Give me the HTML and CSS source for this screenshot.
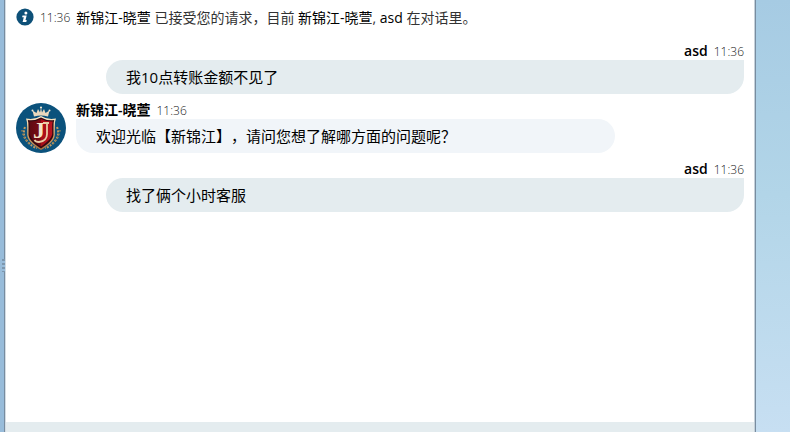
FILE: index.html
```html
<!DOCTYPE html>
<html lang="zh-CN">

<head>
    <meta charset="utf-8">
    <meta name="viewport" content="width=device-width, initial-scale=1.0">
    <title>在线客服</title>
    <link rel="stylesheet" href="styles.css">
</head>

<body>
    <div class="grip"></div>

    <main class="chat">
        <section class="messages">
            <p class="status">
                <svg class="info" viewBox="0 0 18 18" aria-hidden="true">
                    <circle cx="9" cy="9" r="8.6" fill="#0d5078"/>
                    <circle cx="9.9" cy="4.9" r="1.5" fill="#fff"/>
                    <path d="M6.5 7.4h4.2l-1.2 4.7h1.2l-.4 1.8H6.6l1.2-4.7H6.1z" fill="#fff"/>
                </svg>
                <time>11:36</time>
                <span><b>新锦江-晓萱</b> 已接受您的请求，目前 <b>新锦江-晓萱</b>, <b>asd</b> 在对话里。</span>
            </p>

            <article class="message visitor">
                <header><strong>asd</strong><time>11:36</time></header>
                <p class="bubble">我10点转账金额不见了</p>
            </article>

            <article class="message agent">
                <svg class="avatar" viewBox="0 0 50 50" aria-hidden="true">
                    <defs>
                        <linearGradient id="gold" x1="0" y1="0" x2="0" y2="1">
                            <stop offset="0" stop-color="#fff0d0"/>
                            <stop offset=".5" stop-color="#d9ac73"/>
                            <stop offset="1" stop-color="#a9713d"/>
                        </linearGradient>
                        <linearGradient id="red">
                            <stop offset="0" stop-color="#5d0a12"/>
                            <stop offset=".5" stop-color="#7d0b14"/>
                            <stop offset=".52" stop-color="#a70e18"/>
                            <stop offset="1" stop-color="#bb1420"/>
                        </linearGradient>
                    </defs>
                    <circle cx="25" cy="25" r="25" fill="#0b527c"/>
                    <!-- laurel -->
                    <g fill="none" stroke="#bf9a62" stroke-width="2" stroke-dasharray="2 1.3">
                        <path d="M9 24Q6 32 11 38T21 45"/>
                        <path d="M41 24Q44 32 39 38T29 45"/>
                    </g>
                    <g fill="none" stroke="#8f7d56" stroke-width="1.5" stroke-dasharray="1.5 2">
                        <path d="M6 27Q7 36 14 41"/>
                        <path d="M44 27Q43 36 36 41"/>
                    </g>
                    <!-- crown -->
                    <path d="M18 13.5L16.5 7.5L20.5 10L22 6L24 9.5L25 4.5L26 9.5L28 6L29.5 10L33.5 7.5L32 13.5Q25 11.5 18 13.5Z" fill="#ead9bd"/>
                    <circle cx="25" cy="4.5" r="1.1" fill="#f5e9d2"/>
                    <circle cx="16.5" cy="7.5" r="1" fill="#f5e9d2"/>
                    <circle cx="33.5" cy="7.5" r="1" fill="#f5e9d2"/>
                    <!-- shield -->
                    <path d="M25 13Q31 17 40 15.500Q38.500 19 38.800 24V32C38.500 38 32 43 25 47C18 43 11.500 38 11.200 32V24Q11.500 19 10 15.500Q19 17 25 13Z" fill="url(#gold)"/>
                    <path d="M25 14.500Q31 18 38.200 17Q37.300 20 37.500 24V32C37 37 31 42 25 45.500C19 42 13 37 12.500 32V24Q12.700 20 11.800 17Q19 18 25 14.500Z" fill="#350911"/>
                    <path d="M25 16Q31 19 36.700 18.500Q36 21 36.200 24V31C35.500 36 30 40 25 43.500C20 40 14.500 36 13.800 31V24Q14 21 13.300 18.500Q19 19 25 16Z" fill="url(#red)"/>
                    <text class="monogram" x="17" y="35">J</text>
                    <!-- ribbon round the monogram -->
                    <path d="M27 20H33M31 20V31Q31 38 23 39Q19.500 39 18.500 37" fill="none" stroke="#e8cda4" stroke-width="1.800"/>
                </svg>
                <header><strong>新锦江-晓萱</strong><time>11:36</time></header>
                <p class="bubble">欢迎光临【新锦江】，请问您想了解哪方面的问题呢？</p>
            </article>

            <article class="message visitor">
                <header><strong>asd</strong><time>11:36</time></header>
                <p class="bubble">找了俩个小时客服</p>
            </article>
        </section>

        <footer class="bar"></footer>
    </main>
</body>

</html>
```

FILE: styles.css
```css
* {
    box-sizing: border-box;
}

body {
    margin: 0;
    padding: 0 34px 0 4px;
    min-height: 100vh;
    display: flex;
    background: linear-gradient(#a6cbe3, #b2d5e8 45%, #c7dff2);
    font-family: "Open Sans", "Noto Sans CJK SC", sans-serif;
    text-spacing-trim: space-all;
    color: #333;
}

/* drag handle on the left edge */
.grip {
    position: absolute;
    left: 0;
    top: 0;
    width: 4px;
    height: 100%;
    background: #98bcda;
}

.grip::after {
    content: "";
    position: absolute;
    left: 2px;
    top: 60%;
    width: 3px;
    height: 13px;
    background: repeating-linear-gradient(#7d97ae 0 2px, #98bcda 2px 4px);
}

.chat {
    flex: 1;
    display: flex;
    flex-direction: column;
    background: #fff;
    border-left: 1px solid #788c9f;
    border-right: 1px solid #788c9f;
    box-shadow: inset 1px 0 #d3dde5, inset -1px 0 #c5d1da;
}

.messages {
    flex: 1;
    padding: 7px 11px;
}

p {
    margin: 0;
}

.status {
    display: flex;
    align-items: center;
    gap: 6px;
    height: 22px;
    margin-bottom: 6px;
    font-size: 14px;
    line-height: 22px;
}

.status b {
    font-weight: normal;
    color: #000;
}

.info {
    width: 18px;
    height: 18px;
    margin-top: -3px;
}

time {
    font-size: 12px;
    font-weight: 300;
    color: #222;
}

.message header {
    display: flex;
    align-items: baseline;
    gap: 6px;
    height: 25px;
    padding-top: 7px;
    font-size: 14px;
    line-height: 18px;
}

.message strong {
    color: #000;
    font-weight: 600;
}

.bubble {
    padding: 0 20px;
    border-radius: 17px;
    font-size: 15px;
    line-height: 34px;
    color: #000;
}

.visitor {
    margin-left: 90px;
}

.visitor header {
    justify-content: flex-end;
}

.visitor .bubble {
    background: #e4ecef;
    border-top-right-radius: 0;
}

.agent {
    display: grid;
    grid-template-columns: 50px 1fr;
    column-gap: 10px;
}

.agent .bubble {
    margin-right: 129px;
    background: #f1f5f9;
    border-top-left-radius: 0;
}

.avatar {
    grid-row: 1 / 3;
    align-self: end;
    width: 50px;
    height: 50px;
}

.monogram {
    font: bold 24px "Liberation Serif", serif;
    fill: #f5e5c8;
}

.bar {
    height: 10px;
    background: #e4ecef;
    margin: 0 1px;
}
```
